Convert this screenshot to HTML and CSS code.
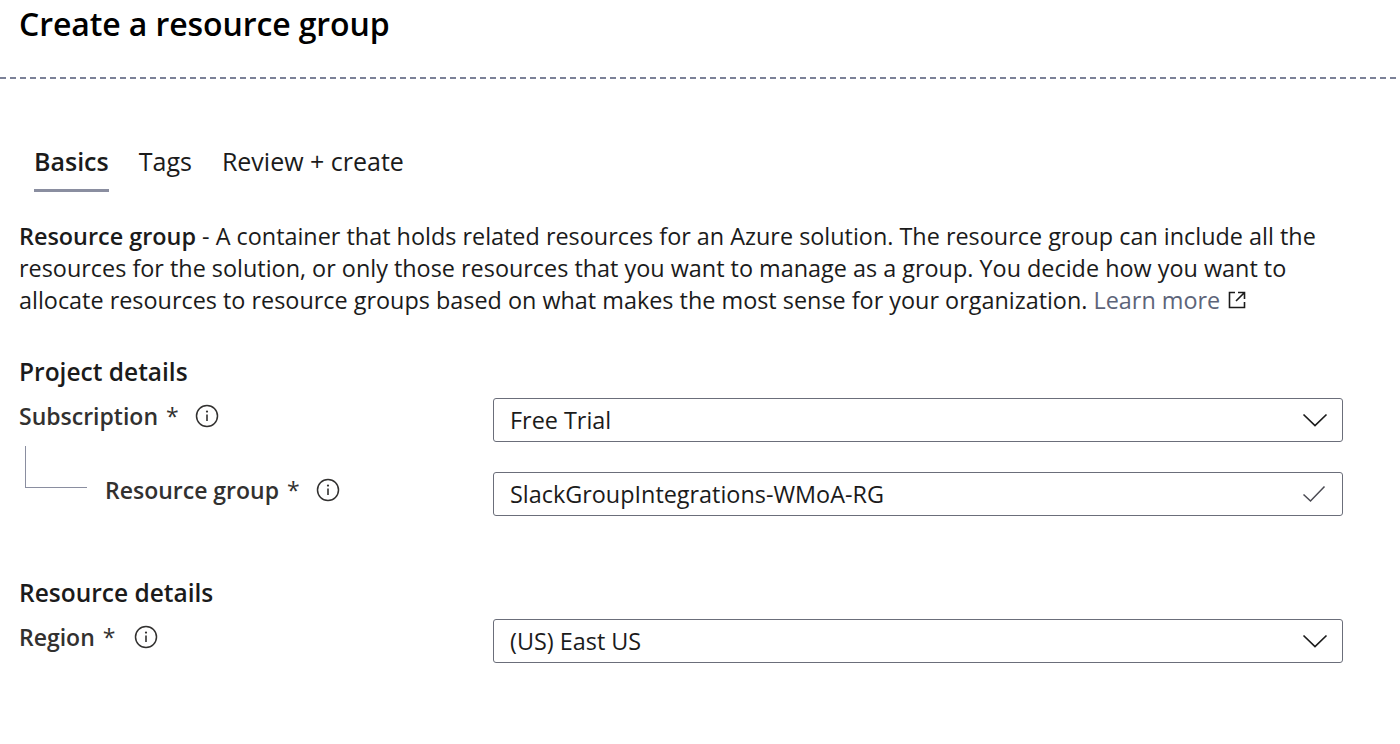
FILE: index.html
```html
<!DOCTYPE html>
<html>
<head>
<meta charset="utf-8">
<link rel="stylesheet" href="styles.css">
</head>
<body>
<div class="page">
  <h1 class="title">Create a resource group</h1>
  <div class="divider"></div>
  <nav class="tabs">
    <span class="tab active">Basics</span>
    <span class="tab">Tags</span>
    <span class="tab">Review + create</span>
  </nav>
  <p class="intro"><strong>Resource group</strong> - A container that holds related resources for an Azure solution. The resource group can include all the resources for the solution, or only those resources that you want to manage as a group. You decide how you want to allocate resources to resource groups based on what makes the most sense for your organization. <a class="link">Learn more<svg class="ext" width="20" height="20" viewBox="0 0 20 20"><path d="M8 2.5H2.5v15h15V12" fill="none" stroke="#1b1b1b" stroke-width="1.6"/><path d="M11 2.5h6.5V9M17.5 2.5 9 11" fill="none" stroke="#1b1b1b" stroke-width="1.6"/></svg></a></p>

  <h2 class="section">Project details</h2>
  <div class="row">
    <div class="label">Subscription <span class="req">*</span><span class="info"><svg width="24" height="24" viewBox="0 0 24 24"><circle cx="12" cy="12" r="10.5" fill="none" stroke="#323130" stroke-width="1.5"/><circle cx="12" cy="7.6" r="1.1" fill="#323130"/><path d="M12 10.5v6.5" stroke="#323130" stroke-width="1.6"/></svg></span></div>
    <div class="field"><span>Free Trial</span><svg class="chev" width="26" height="16" viewBox="0 0 26 16"><path d="M1.5 2.5 13 13.5 24.5 2.5" fill="none" stroke="#1b1b1b" stroke-width="1.7"/></svg></div>
  </div>
  <div class="row sub">
    <div class="label nested"><span class="tree"></span>Resource group <span class="req">*</span><span class="info"><svg width="24" height="24" viewBox="0 0 24 24"><circle cx="12" cy="12" r="10.5" fill="none" stroke="#323130" stroke-width="1.5"/><circle cx="12" cy="7.6" r="1.1" fill="#323130"/><path d="M12 10.5v6.5" stroke="#323130" stroke-width="1.6"/></svg></span></div>
    <div class="field"><span>SlackGroupIntegrations-WMoA-RG</span><svg class="check" width="24" height="18" viewBox="0 0 24 18"><path d="M1.5 9.5 8.5 16 22.5 1.5" fill="none" stroke="#4a4a52" stroke-width="1.5"/></svg></div>
  </div>

  <h2 class="section second">Resource details</h2>
  <div class="row last">
    <div class="label">Region <span class="req">*</span><span class="info region"><svg width="24" height="24" viewBox="0 0 24 24"><circle cx="12" cy="12" r="10.5" fill="none" stroke="#323130" stroke-width="1.5"/><circle cx="12" cy="7.6" r="1.1" fill="#323130"/><path d="M12 10.5v6.5" stroke="#323130" stroke-width="1.6"/></svg></span></div>
    <div class="field"><span>(US) East US</span><svg class="chev" width="26" height="16" viewBox="0 0 26 16"><path d="M1.5 2.5 13 13.5 24.5 2.5" fill="none" stroke="#1b1b1b" stroke-width="1.7"/></svg></div>
  </div>
</div>
</body>
</html>
```

FILE: styles.css
```css
* { box-sizing: border-box; }
html, body { margin: 0; padding: 0; background: #fff; }
body {
  font-family: "Open Sans", "Noto Sans", sans-serif;
  color: #1b1b1b;
  width: 1400px;
  height: 744px;
  overflow: hidden;
}
.page { padding: 0 0 0 19px; }
.title {
  margin: 0;
  padding-top: 3px;
  font-size: 32px;
  font-weight: 600;
  line-height: 42px;
  color: #000;
  letter-spacing: -0.1px;
}
.divider {
  margin: 32px 0 0 -19px;
  height: 2px;
  background: repeating-linear-gradient(90deg, #7b8197 0 6px, transparent 6px 10px);
}
.tabs {
  display: flex;
  gap: 30px;
  margin: 66px 0 0 15px;
}
.tab {
  font-size: 25px;
  line-height: 32px;
  padding-bottom: 12px;
  border-bottom: 3px solid transparent;
  color: #1b1b1b;
}
.tab.active { font-weight: 600; border-bottom-color: #8a8ea0; }
.intro {
  margin: 28px 0 0 0;
  width: 1332px;
  font-size: 23.4px;
  line-height: 32px;
}
.intro strong { font-weight: 600; }
.link { color: #5d6479; }
.ext { vertical-align: -1px; margin-left: 7px; }
.section {
  margin: 40px 0 0 0;
  font-size: 24.5px;
  font-weight: 600;
  line-height: 32px;
}
.section.second { margin-top: 61px; }
.row {
  display: flex;
  align-items: center;
  height: 44px;
  margin-top: 10px;
}
.row.sub { margin-top: 30px; }
.label {
  position: relative;
  width: 474px;
  flex: none;
  display: flex;
  align-items: center;
  padding-bottom: 8px;
  font-size: 23px;
  font-weight: 600;
  color: #323130;
}
.label.nested { padding-left: 86px; }
.tree {
  position: absolute;
  left: 6px;
  top: -28px;
  width: 62px;
  height: 42px;
  border-left: 1.5px solid #8a8ea0;
  border-bottom: 1.5px solid #8a8ea0;
}
.req { margin-left: 8px; font-weight: 400; }
.info { display: inline-flex; margin-left: 16px; }
.info.region { margin-left: 19px; }
.field {
  width: 850px;
  height: 44px;
  border: 1.5px solid #6b6e7a;
  border-radius: 3px;
  display: flex;
  align-items: center;
  justify-content: space-between;
  padding: 0 14px 0 16px;
  font-size: 23.4px;
  color: #1b1b1b;
}
.check { margin-right: 2px; }
```
